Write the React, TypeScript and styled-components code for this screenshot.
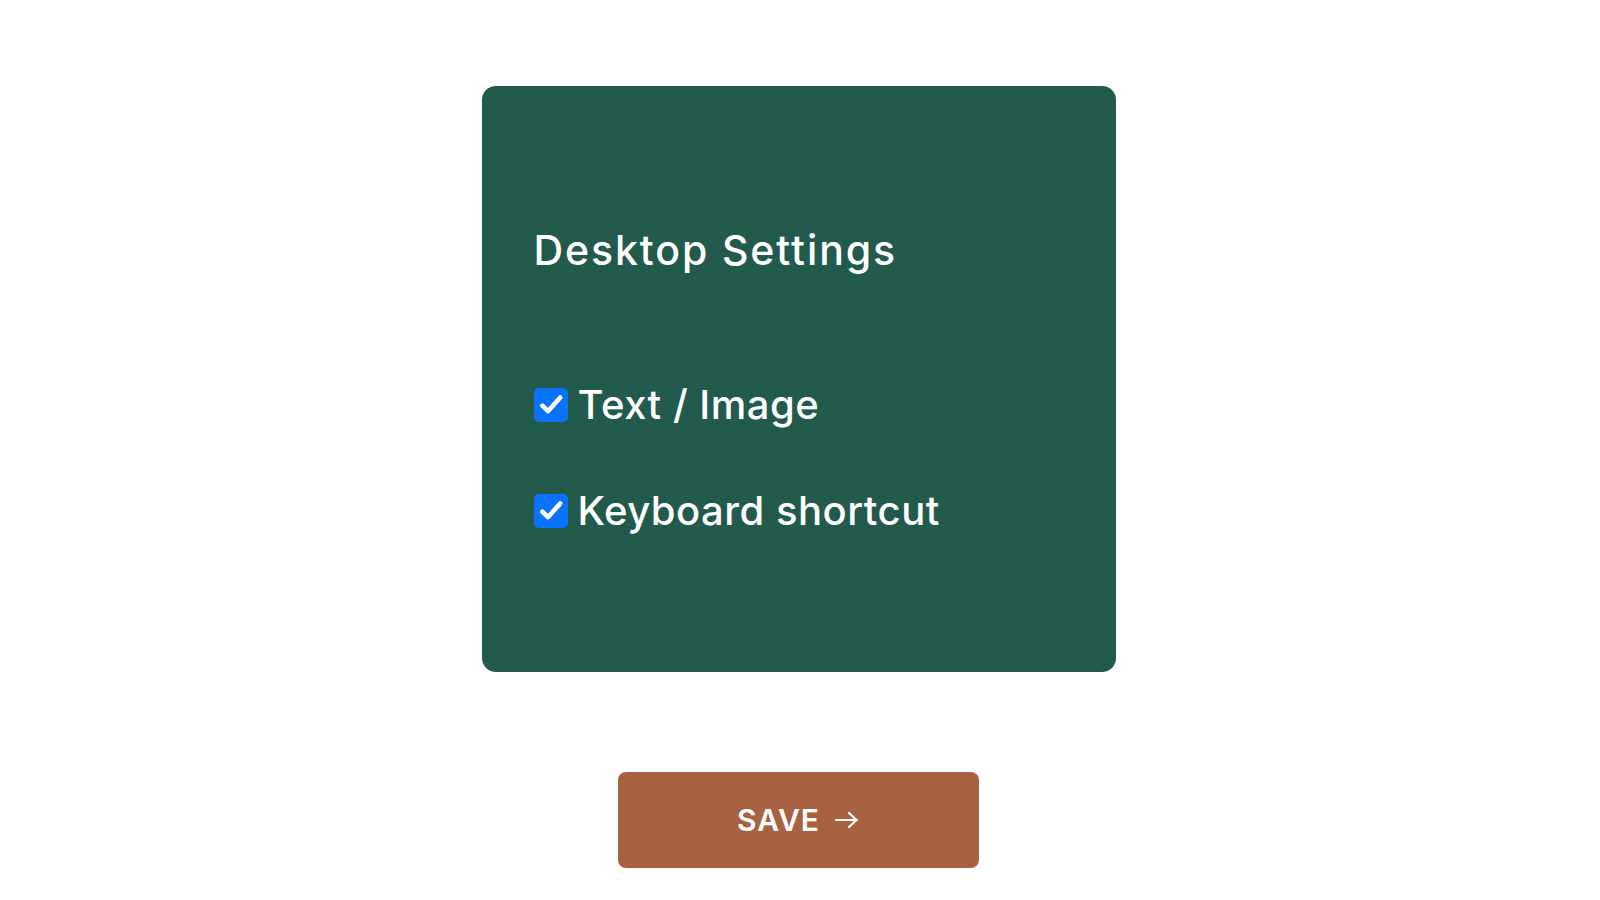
import React, { useState } from 'react';
import styled, { createGlobalStyle } from 'styled-components';

const GlobalStyle = createGlobalStyle`
  html, body {
    margin: 0;
    padding: 0;
    background: #ffffff;
  }
  body {
    font-family: Inter, "Noto Sans", "Liberation Sans", sans-serif;
  }
`;

const Page = styled.div`
  display: flex;
  flex-direction: column;
  align-items: center;
  padding-top: 86px;
  padding-right: 3px;
`;

const Card = styled.section`
  box-sizing: border-box;
  width: 634px;
  height: 586px;
  background: #225a4c;
  border-radius: 14px;
  padding: 142px 52px 0;
  display: flex;
  flex-direction: column;
`;

const Title = styled.h1`
  margin: 0;
  color: #ffffff;
  font-size: 41px;
  font-weight: 500;
  line-height: 44px;
  letter-spacing: 1.9px;
`;

const Options = styled.div`
  margin-top: 115px;
  display: flex;
  flex-direction: column;
  gap: 70px;
`;

const Option = styled.label`
  display: flex;
  align-items: center;
  gap: 10px;
  cursor: pointer;
  color: #ffffff;
  font-size: 40px;
  font-weight: 500;
  line-height: 36px;
  letter-spacing: 0.5px;
`;

const HiddenInput = styled.input`
  position: absolute;
  opacity: 0;
  width: 0;
  height: 0;
`;

const Box = styled.span<{ $checked: boolean }>`
  flex: none;
  width: 34px;
  height: 34px;
  border-radius: 5px;
  background: ${(p) => (p.$checked ? '#0b72fb' : '#ffffff')};
  display: flex;
  align-items: center;
  justify-content: center;
`;

const SaveButton = styled.button`
  margin-top: 100px;
  width: 361px;
  height: 96px;
  border: none;
  border-radius: 8px;
  background: #a86242;
  color: #ffffff;
  font-family: Inter, "Noto Sans", sans-serif;
  font-size: 30px;
  font-weight: 600;
  letter-spacing: 1px;
  cursor: pointer;
  display: flex;
  align-items: center;
  justify-content: center;
  gap: 14px;
`;

const Check = () => (
  <svg width="26" height="26" viewBox="0 0 24 24">
    <path d="M4 12.5l5.2 5.2L20.5 5" fill="none" stroke="#ffffff" strokeWidth="4.2" strokeLinecap="round" strokeLinejoin="round" />
  </svg>
);

const Arrow = () => (
  <svg width="26" height="20" viewBox="0 0 26 20">
    <path d="M2 10h21M15 3l7.5 7L15 17" fill="none" stroke="#ffffff" strokeWidth="2.2" strokeLinecap="round" strokeLinejoin="round" />
  </svg>
);

const App: React.FC = () => {
  const [textImage, setTextImage] = useState(true);
  const [shortcut, setShortcut] = useState(true);

  return (
    <Page>
      <GlobalStyle />
      <Card>
        <Title>Desktop Settings</Title>
        <Options>
          <Option>
            <HiddenInput type="checkbox" checked={textImage} onChange={() => setTextImage(!textImage)} />
            <Box $checked={textImage}>{textImage && <Check />}</Box>
            Text / Image
          </Option>
          <Option>
            <HiddenInput type="checkbox" checked={shortcut} onChange={() => setShortcut(!shortcut)} />
            <Box $checked={shortcut}>{shortcut && <Check />}</Box>
            Keyboard shortcut
          </Option>
        </Options>
      </Card>
      <SaveButton>
        SAVE
        <Arrow />
      </SaveButton>
    </Page>
  );
};

export default App;
